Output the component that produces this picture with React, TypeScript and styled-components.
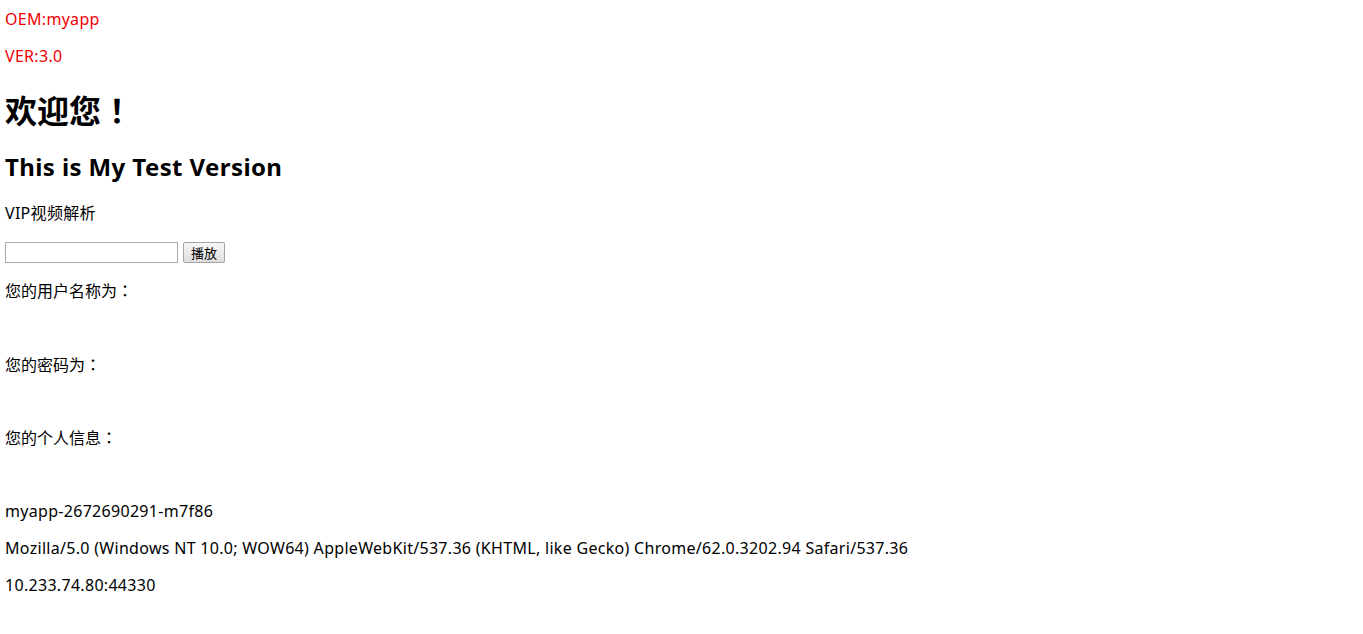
import React from 'react';
import styled, { createGlobalStyle } from 'styled-components';

const GlobalStyle = createGlobalStyle`
    html, body {
        margin: 0;
        padding: 0;
        background: #ffffff;
    }
    body {
        font-family: "Noto Sans", "Noto Sans CJK SC", sans-serif;
        font-size: 16px;
        color: #000000;
    }
`;

const App = () => {
    const oem = 'myapp';
    const version = '3.0';
    const hostName = 'myapp-2672690291-m7f86';
    const userAgent =
        'Mozilla/5.0 (Windows NT 10.0; WOW64) AppleWebKit/537.36 (KHTML, like Gecko) Chrome/62.0.3202.94 Safari/537.36';
    const address = '10.233.74.80:44330';
    return (
        <Page>
            <GlobalStyle />
            <Info>{`OEM:${oem}`}</Info>
            <Info>{`VER:${version}`}</Info>
            <Welcome>欢迎您<Punct>！</Punct></Welcome>
            <SubTitle>This is My Test Version</SubTitle>
            <Line>VIP视频解析</Line>
            <PlayForm onSubmit={(e) => e.preventDefault()}>
                <UrlInput type="text" />
                <PlayButton type="submit">播放</PlayButton>
            </PlayForm>
            <Label>您的用户名称为<Punct>：</Punct></Label>
            <Value>{''}</Value>
            <Label>您的密码为<Punct>：</Punct></Label>
            <Value>{''}</Value>
            <Label>您的个人信息<Punct>：</Punct></Label>
            <Value>{''}</Value>
            <Line>{hostName}</Line>
            <Line>{userAgent}</Line>
            <Line>{address}</Line>
        </Page>
    );
};

const Page = styled.div`
    display: flow-root;
    padding: 0 5px;
    & > :first-child {
        margin-top: 9px;
    }
`;
const Line = styled.p`
    margin: 16px 0;
    line-height: 21px;
    letter-spacing: 0.3px;
    white-space: nowrap;
`;
const Info = styled(Line)`
    color: #f00000;
`;
const Label = styled(Line)`
    font-family: "Noto Sans CJK SC", sans-serif;
    letter-spacing: 0;
`;
// SC face puts ！ and ： at the left of the cell; the original centres them
const Punct = styled.span`
    display: inline-block;
    width: 1em;
    text-align: center;
    font-family: "Noto Sans CJK TC", "Noto Sans CJK JP", sans-serif;
`;
const Value = styled(Line)`
    min-height: 20.5px;
`;
const Welcome = styled.h1`
    margin: 21px 0;
    font-family: "Noto Sans CJK SC", sans-serif;
    font-size: 32px;
    line-height: 42px;
    font-weight: bold;
`;
const SubTitle = styled.h2`
    margin: 20px 0;
    font-size: 24px;
    line-height: 32px;
    font-weight: bold;
    letter-spacing: 0.4px;
`;
const PlayForm = styled.form`
    display: flex;
    align-items: center;
    gap: 5px;
    height: 24px;
    margin: 16px 0;
`;
const UrlInput = styled.input`
    box-sizing: border-box;
    width: 173px;
    height: 21px;
    margin: 0;
    padding: 1px 2px;
    border: 1px solid #a9a9a9;
    background: #ffffff;
    font-size: 13px;
    outline: none;
`;
const PlayButton = styled.button`
    box-sizing: border-box;
    width: 42px;
    height: 21px;
    margin: 0;
    padding: 0 6px;
    border: 1px solid #a3a3a3;
    border-radius: 2px;
    background: linear-gradient(#f7f7f7, #dedede);
    font-family: "Noto Sans CJK SC", sans-serif;
    font-size: 13px;
    line-height: 17px;
    color: #000000;
`;

export default App;
